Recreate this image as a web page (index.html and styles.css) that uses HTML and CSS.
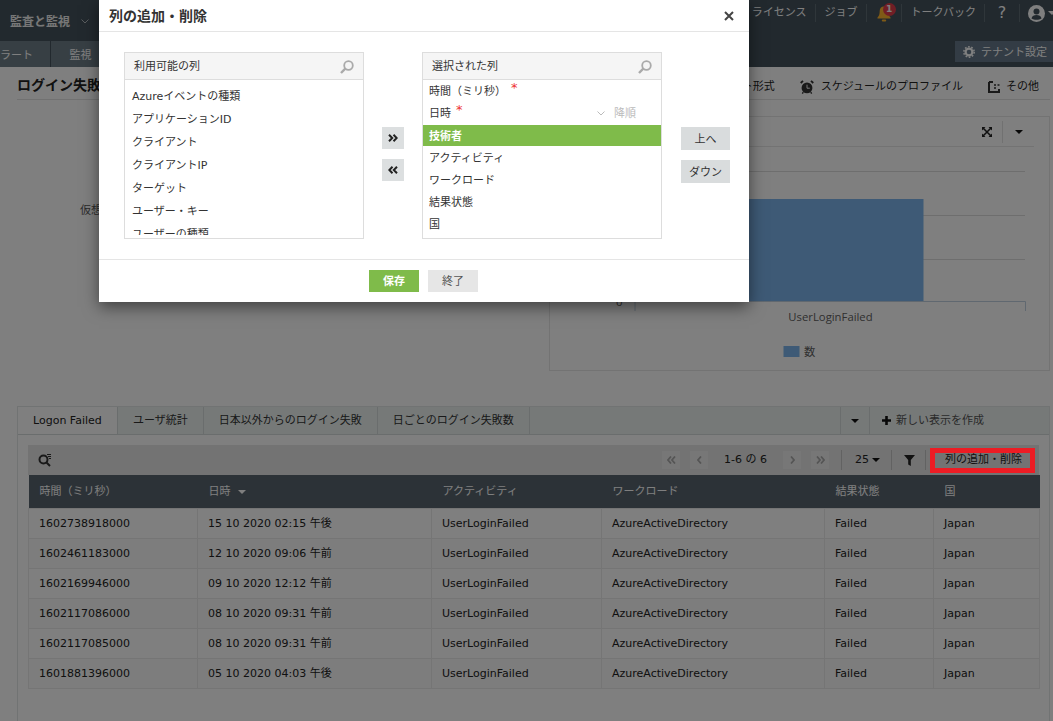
FILE: index.html
```html
<!DOCTYPE html>
<html lang="ja">
<head>
<meta charset="utf-8">
<title>列の追加・削除</title>
<link rel="stylesheet" href="styles.css">
</head>
<body>
<div class="app">
  <header class="topbar">
    <div class="brand">監査と監視<svg class="brand-chev" width="8" height="5" viewBox="0 0 8 5"><path d="M.5.5 4 4 7.5.5" fill="none" stroke="#fff" stroke-width="1"/></svg></div>
    <nav class="topnav">
      <span class="topitem">ライセンス</span>
      <span class="topitem">ジョブ</span>
      <span class="topitem bell">
        <svg width="14" height="17" viewBox="0 0 14 17"><path d="M7 1.500c-2.800 0-4.300 2-4.300 4.600 0 3.300-.7 5-2.200 6.400v1h13v-1c-1.500-1.400-2.200-3.100-2.200-6.400C11.300 3.500 9.800 1.500 7 1.500z" fill="#ffb52e"/><rect x="4.800" y="14.500" width="4.400" height="2" rx="1" fill="#ffb52e"/></svg>
        <b class="badge">1</b>
      </span>
      <span class="topitem">トークバック</span>
      <span class="topitem help">?</span>
      <span class="topitem user">
        <svg width="17" height="17" viewBox="0 0 17 17"><circle cx="8.500" cy="8.500" r="8.500" fill="#fff"/><circle cx="8.500" cy="6.500" r="3" fill="#44525c"/><path d="M3.500 13.500c.6-2.600 2.500-3.500 5-3.500s4.400.9 5 3.500c-2.800 1.700-7.200 1.700-10 0z" fill="#44525c"/></svg>
        <i class="user-caret"></i>
      </span>
    </nav>
  </header>
  <div class="subnav">
    <div class="subtabs"><span class="subtab first">ラート</span><span class="subtab">監視</span></div>
    <div class="tenant">
      <svg width="12" height="12" viewBox="0 0 12 12"><circle cx="6" cy="6" r="3.400" fill="none" stroke="#fff" stroke-width="2.200"/><circle cx="6" cy="6" r="5.200" fill="none" stroke="#fff" stroke-width="1.500" stroke-dasharray="1.700 1.570"/></svg>
      <span class="tenant-label">テナント設定</span>
    </div>
  </div>
  <main class="main">
    <div class="titlebar">
      <h1 class="page-title">ログイン失敗</h1>
      <div class="actions">
        <span class="action">エクスポート形式</span>
        <span class="action wide">
          <svg width="14" height="14" viewBox="0 0 15 15"><circle cx="7.500" cy="8.500" r="5.800" fill="#333"/><path d="M7.500 5v3.800h3" fill="none" stroke="#fff" stroke-width="1"/><path d="M.8 3.200 3.200.9M14.200 3.200 11.800.9" stroke="#333" stroke-width="2"/><path d="M3.500 13 2.500 14.500M11.500 13l1 1.500" stroke="#333" stroke-width="1.500"/></svg>
          スケジュールのプロファイル
        </span>
        <span class="action">
          <svg width="12" height="12" viewBox="0 0 12 12"><path d="M1 1v10h10V8" fill="none" stroke="#333" stroke-width="2"/><path d="M1 1h4" stroke="#333" stroke-width="2"/><path d="M6 4h2M9.500 4h2M6 7h2" stroke="#333" stroke-width="1.500"/></svg>
          その他
        </span>
      </div>
    </div>
    <section class="report">
      <div class="report-left"><span class="axis-note">仮想</span></div>
      <div class="chart-panel">
        <div class="chart-tools">
          <svg width="12" height="12" viewBox="0 0 12 12"><path d="M1 1h3.500L1 4.500zM11 1v3.500L7.500 1zM1 11V7.500L4.500 11zM11 11H7.500L11 7.500z" fill="#222"/><path d="M2 2l8 8M10 2l-8 8" stroke="#222" stroke-width="1.600"/></svg>
          <span class="tool-sep"></span>
          <i class="caret"></i>
        </div>
        <div class="chart-rule"></div>
        <svg class="plot" width="499" height="225" viewBox="0 0 499 225">
          <path d="M85 24.500H475M85 68.500H475M85 112.500H475" stroke="#ddd" fill="none"/>
          <rect x="85" y="52" width="288.500" height="103" fill="#7cb5ec"/>
          <path d="M85 164v-9.500h390.500v9.500" stroke="#c0d0e0" fill="none"/>
          <text x="66" y="159" class="plot-label">0</text>
          <text x="280.500" y="174" class="plot-label" text-anchor="middle">UserLoginFailed</text>
          <rect x="233.500" y="199" width="16" height="11" fill="#7cb5ec"/>
          <text x="254" y="209" class="plot-label">数</text>
        </svg>
      </div>
    </section>
    <section class="views">
      <div class="tabbar">
        <span class="tab active">Logon Failed</span>
        <span class="tab">ユーザ統計</span>
        <span class="tab">日本以外からのログイン失敗</span>
        <span class="tab">日ごとのログイン失敗数</span>
        <span class="tab-fill"></span>
        <span class="tab-tool"><i class="caret"></i></span>
        <span class="tab-new">
          <svg width="9" height="9" viewBox="0 0 9 9"><path d="M4.500 0v9M0 4.500h9" stroke="#111" stroke-width="2.600"/></svg>
          新しい表示を作成
        </span>
      </div>
      <div class="table-wrap">
        <div class="tbl-tools">
          <svg class="tbl-search" width="14" height="14" viewBox="0 0 14 14"><circle cx="5.500" cy="6.500" r="4" fill="none" stroke="#333" stroke-width="2"/><path d="M8.500 9.500 12 13" stroke="#333" stroke-width="2"/><path d="M9 1.500h4M10 3.500h3M11 5.500h2" stroke="#333" stroke-width="1"/></svg>
          <div class="pager">
            <span class="pg"><svg width="9" height="8" viewBox="0 0 9 8"><path d="M4 .5 1 4l3 3.500M8 .5 5 4l3 3.500" fill="none" stroke="#aaa" stroke-width="1.800"/></svg></span>
            <span class="pg"><svg width="5" height="8" viewBox="0 0 5 8"><path d="M4 .5 1 4l3 3.500" fill="none" stroke="#aaa" stroke-width="1.800"/></svg></span>
            <span class="pg-count">1-6 の 6</span>
            <span class="pg"><svg width="5" height="8" viewBox="0 0 5 8"><path d="M1 .5 4 4 1 7.500" fill="none" stroke="#aaa" stroke-width="1.800"/></svg></span>
            <span class="pg"><svg width="9" height="8" viewBox="0 0 9 8"><path d="M1 .5 4 4 1 7.500M5 .5 8 4 5 7.500" fill="none" stroke="#aaa" stroke-width="1.800"/></svg></span>
          </div>
          <span class="tbl-sep sep-a"></span>
          <span class="per-page">25<i class="caret"></i></span>
          <span class="tbl-sep sep-b"></span>
          <svg class="funnel" width="11" height="11" viewBox="0 0 11 11"><path d="M0 0h11L6.800 5v6L4.200 9.500V5z" fill="#222"/></svg>
          <span class="tbl-sep sep-c"></span>
          <span class="add-col">列の追加・削除</span>
        </div>
        <table class="grid">
          <colgroup><col class="c1"><col class="c2"><col class="c3"><col class="c4"><col class="c5"><col class="c6"></colgroup>
          <thead>
            <tr><th>時間（ミリ秒）</th><th>日時<i class="sort-caret"></i></th><th>アクティビティ</th><th>ワークロード</th><th>結果状態</th><th>国</th></tr>
          </thead>
          <tbody>
            <tr><td>1602738918000</td><td>15 10 2020 02:15 午後</td><td>UserLoginFailed</td><td>AzureActiveDirectory</td><td>Failed</td><td>Japan</td></tr>
            <tr><td>1602461183000</td><td>12 10 2020 09:06 午前</td><td>UserLoginFailed</td><td>AzureActiveDirectory</td><td>Failed</td><td>Japan</td></tr>
            <tr><td>1602169946000</td><td>09 10 2020 12:12 午前</td><td>UserLoginFailed</td><td>AzureActiveDirectory</td><td>Failed</td><td>Japan</td></tr>
            <tr><td>1602117086000</td><td>08 10 2020 09:31 午前</td><td>UserLoginFailed</td><td>AzureActiveDirectory</td><td>Failed</td><td>Japan</td></tr>
            <tr><td>1602117085000</td><td>08 10 2020 09:31 午前</td><td>UserLoginFailed</td><td>AzureActiveDirectory</td><td>Failed</td><td>Japan</td></tr>
            <tr><td>1601881396000</td><td>05 10 2020 04:03 午後</td><td>UserLoginFailed</td><td>AzureActiveDirectory</td><td>Failed</td><td>Japan</td></tr>
          </tbody>
        </table>
      </div>
    </section>
  </main>
</div>

<div class="overlay"></div>

<div class="modal">
  <div class="modal-head">
    <h2 class="modal-title">列の追加・削除</h2>
    <svg class="close" width="10" height="10" viewBox="0 0 10 10"><path d="M1 1l8 8M9 1 1 9" stroke="#444" stroke-width="2"/></svg>
  </div>
  <div class="modal-body">
    <div class="listbox">
      <div class="list-head"><span>利用可能の列</span>
        <svg width="14" height="14" viewBox="0 0 14 14"><circle cx="8.500" cy="5.500" r="4.300" fill="none" stroke="#aaa" stroke-width="1.800"/><path d="M5.300 8.700 1 13" stroke="#aaa" stroke-width="2.400"/></svg>
      </div>
      <ul class="items avail">
        <li>Azureイベントの種類</li>
        <li>アプリケーションID</li>
        <li>クライアント</li>
        <li>クライアントIP</li>
        <li>ターゲット</li>
        <li>ユーザー・キー</li>
        <li>ユーザーの種類</li>
      </ul>
    </div>
    <div class="movers">
      <span class="mover"><svg width="10" height="8" viewBox="0 0 10 8"><path d="M1 .8 4.200 4 1 7.200M5.500 .8 8.700 4 5.500 7.200" fill="none" stroke="#222" stroke-width="2"/></svg></span>
      <span class="mover"><svg width="10" height="8" viewBox="0 0 10 8"><path d="M4.500 .8 1.300 4l3.200 3.200M9 .8 5.800 4 9 7.200" fill="none" stroke="#222" stroke-width="2"/></svg></span>
    </div>
    <div class="listbox">
      <div class="list-head"><span>選択された列</span>
        <svg width="14" height="14" viewBox="0 0 14 14"><circle cx="8.500" cy="5.500" r="4.300" fill="none" stroke="#aaa" stroke-width="1.800"/><path d="M5.300 8.700 1 13" stroke="#aaa" stroke-width="2.400"/></svg>
      </div>
      <ul class="items chosen">
        <li>時間（ミリ秒）<em class="req">*</em></li>
        <li>日時<em class="req">*</em>
          <span class="order"><svg width="8" height="5" viewBox="0 0 8 5"><path d="M.5.5 4 4 7.500.5" fill="none" stroke="#bbb"/></svg>降順</span>
        </li>
        <li class="selected">技術者</li>
        <li>アクティビティ</li>
        <li>ワークロード</li>
        <li>結果状態</li>
        <li>国</li>
      </ul>
    </div>
    <div class="orderers">
      <span class="orderer">上へ</span>
      <span class="orderer">ダウン</span>
    </div>
  </div>
  <div class="modal-foot">
    <span class="btn save">保存</span>
    <span class="btn quit">終了</span>
  </div>
</div>
</body>
</html>
```

FILE: styles.css
```css
* { box-sizing: border-box; }
html, body { margin: 0; padding: 0; }
body {
  width: 1053px;
  height: 721px;
  overflow: hidden;
  position: relative;
  background: #fff;
  color: #333;
  font: 11px/1.2 "DejaVu Sans", "Noto Sans CJK JP", sans-serif;
}
ul { list-style: none; margin: 0; padding: 0; }
h1, h2 { margin: 0; }
.app { height: 721px; overflow: hidden; }

.topbar {
  height: 41px;
  background: #44525c;
  display: flex;
  justify-content: space-between;
  color: #fff;
}
.brand {
  padding: 14px 0 0 10px;
  width: 300px;
  font-size: 12px;
  font-weight: 700;
  color: #eee;
  line-height: 16px;
}
.brand-chev { margin-left: 11px; vertical-align: 2px; opacity: .6; }
.topnav { display: flex; height: 26px; padding-top: 4px; align-items: flex-start; }
.topitem {
  height: 18px;
  padding: 0 8px 0 9px;
  border-right: 1px solid #5f6c75;
  line-height: 16px;
  color: #fff;
  display: flex;
  align-items: center;
}
.bell { position: relative; padding: 0 10px; width: 35px; }
.badge {
  position: absolute;
  left: 16px;
  top: -1px;
  width: 13px;
  height: 13px;
  border-radius: 50%;
  background: #e33d4a;
  color: #fff;
  font: 700 9px/13px "DejaVu Sans", sans-serif;
  text-align: center;
}
.help { width: 35px; padding: 0; justify-content: center; font-size: 16px; color: #fff; }
.user { border: 0; padding: 0 0 0 8px; gap: 3px; width: 33px; overflow: hidden; }
.user svg { flex: none; }
.user-caret {
  flex: none;
  border: 4px solid transparent;
  border-top-color: #fff;
  border-bottom: 0;
}

.subnav {
  height: 26px;
  background: #44525c;
  display: flex;
  justify-content: space-between;
  color: #fff;
}
.subtabs { display: flex; background: #6f7f89; width: 210px; }
.subtab {
  width: 60px;
  text-align: center;
  line-height: 30px;
  border-right: 1px solid #44525c;
}
.subtab.first { width: 51px; text-align: left; }
.tenant {
  width: 98px;
  height: 21px;
  background: #67798a;
  display: flex;
  align-items: center;
  gap: 6px;
  padding-left: 8px;
  white-space: nowrap;
  overflow: hidden;
}
.tenant svg { flex: none; }
.tenant-label { padding-top: 2px; }

.main { padding: 0 3px 0 17px; }
.titlebar {
  height: 33px;
  padding-top: 4px;
  border-bottom: 1px solid #e2e2e2;
  display: flex;
  justify-content: space-between;
  align-items: center;
}
.page-title { font-size: 14px; font-weight: 700; color: #222; white-space: nowrap; }
.actions { display: flex; gap: 25px; padding: 3px 11px 0 0; }
.action { display: flex; align-items: center; gap: 6px; color: #222; }
.action.wide { gap: 7px; }

.report { display: flex; justify-content: space-between; padding-top: 16px; height: 287px; }
.report-left { padding: 88px 0 0 63px; }
.axis-note { color: #555; }
.chart-panel { width: 501px; height: 255px; border: 1px solid #e6e6e6; }
.chart-tools {
  height: 29px;
  display: flex;
  align-items: center;
  justify-content: flex-end;
  padding-right: 26px;
}
.chart-tools .tool-sep { width: 1px; height: 22px; background: #e2e2e2; margin: 0 12px 0 9px; }
.chart-rule { height: 1px; background: #e6e6e6; margin-right: 15px; }
.plot { display: block; }
.plot-label { font: 11.300px "Open Sans", "Noto Sans CJK JP", sans-serif; fill: #606060; }
.caret {
  display: inline-block;
  border: 4px solid transparent;
  border-top: 4px solid #111;
  border-bottom: 0;
}

.views {
  margin-top: 19px;
  height: 340px;
  border: 1px solid #e2e6e6;
  border-bottom: 0;
}
.tabbar {
  height: 28px;
  display: flex;
  background: #ecf2f1;
  border-bottom: 1px solid #d4dbda;
}
.tab {
  padding: 0 15px;
  line-height: 27px;
  border-right: 1px solid #d4dbda;
  color: #333;
  white-space: nowrap;
}
.tab.active { background: #fff; height: 27px; color: #222; width: 100px; padding: 0 0 0 15px; }
.tab-fill { flex: 1; }
.tab-tool {
  width: 30px;
  border-left: 1px solid #d4dbda;
  border-right: 1px solid #d4dbda;
  display: flex;
  align-items: center;
  justify-content: center;
}
.tab-new {
  width: 179px;
  padding-left: 12px;
  display: flex;
  align-items: center;
  gap: 5px;
  color: #555;
}
.table-wrap { padding: 10px 10px 0; }
.tbl-tools {
  height: 30px;
  background: #e6e6e6;
  display: flex;
  align-items: center;
  padding-left: 10px;
}
.tbl-search { margin-right: auto; }
.pager { display: flex; align-items: center; gap: 10px; }
.pg {
  width: 18px;
  height: 18px;
  background: #efefef;
  display: flex;
  align-items: center;
  justify-content: center;
}
.pg-count { width: 55px; text-align: center; color: #222; white-space: nowrap; }
.tbl-sep { width: 1px; height: 20px; background: #c4c4c4; }
.sep-a { margin: 0 13px 0 12px; }
.sep-b { margin: 0 12px 0 11px; }
.sep-c { margin-left: 10px; }
.per-page { width: 25px; display: flex; align-items: center; justify-content: space-between; color: #222; }
.funnel { flex: none; }
.add-col {
  position: relative;
  width: 113px;
  height: 30px;
  padding-left: 19px;
  line-height: 30px;
  color: #222;
  white-space: nowrap;
}
.add-col::after {
  content: "";
  position: absolute;
  z-index: 30;
  left: 4px;
  top: 3px;
  width: 95px;
  height: 15px;
  border: 5px solid #ed1c24;
}

.grid { width: 1011px; border-collapse: collapse; table-layout: fixed; }
.c1 { width: 169px; }
.c2 { width: 234px; }
.c3 { width: 170px; }
.c4 { width: 223px; }
.c5 { width: 109px; }
.c6 { width: 106px; }
.grid th {
  height: 33px;
  background: #58646e;
  color: #fff;
  font-weight: 400;
  text-align: left;
  padding: 0 11px;
}
.grid td {
  height: 30px;
  padding: 2px 10px 0;
  border: 1px solid #eaeaea;
  color: #222;
  white-space: nowrap;
}
.grid tbody tr:nth-child(even) td { background: #fafafa; }
.sort-caret {
  display: inline-block;
  border: 4px solid transparent;
  border-top-color: #fff;
  border-bottom: 0;
  margin-left: 7px;
  vertical-align: 1px;
}

.overlay {
  position: absolute;
  inset: 0;
  z-index: 10;
  background: rgba(0, 0, 0, .5);
}
.modal {
  position: absolute;
  z-index: 20;
  left: 99px;
  top: 0;
  width: 650px;
  height: 302px;
  background: #fff;
  box-shadow: 0 5px 15px rgba(0, 0, 0, .5);
  display: flex;
  flex-direction: column;
}
.modal-head {
  height: 32px;
  border-bottom: 1px solid #e5e5e5;
  display: flex;
  align-items: center;
  justify-content: space-between;
  padding: 0 15px 0 10px;
}
.modal-title { font-size: 14px; font-weight: 700; color: #333; padding-top: 2px; }
.close { display: block; }
.modal-body {
  height: 228px;
  border-bottom: 1px solid #e5e5e5;
  padding: 20px 0 0 25px;
  display: flex;
  align-items: flex-start;
}
.listbox {
  width: 240px;
  height: 187px;
  border: 1px solid #ddd;
  overflow: hidden;
}
.list-head {
  height: 27px;
  background: #f5f5f5;
  border-bottom: 1px solid #ddd;
  display: flex;
  align-items: center;
  justify-content: space-between;
  padding: 2px 9px 0;
  color: #333;
}
.items { color: #333; }
.avail { padding-top: 5px; height: 155px; overflow: hidden; }
.avail li { height: 23px; line-height: 24px; padding-left: 7px; white-space: nowrap; }
.chosen li {
  height: 21px;
  line-height: 21px;
  margin-bottom: 1px;
  padding: 1px 25px 0 6px;
  display: flex;
  align-items: center;
}
.chosen li:nth-child(2) { margin-bottom: 2px; }
.chosen .selected { background: #7fbb4a; color: #fff; font-weight: 700; }
.req {
  color: #e33;
  font-style: normal;
  font-size: 13px;
  line-height: 10px;
  align-self: flex-start;
  margin: 2px 0 0 5px;
}
.order {
  margin-left: auto;
  display: flex;
  align-items: center;
  gap: 9px;
  color: #bbb;
}
.movers {
  width: 58px;
  padding: 75px 0 0 18px;
  display: flex;
  flex-direction: column;
  gap: 10px;
}
.mover {
  width: 22px;
  height: 22px;
  background: #dcdfe0;
  display: flex;
  align-items: center;
  justify-content: center;
}
.orderers {
  margin-left: 19px;
  padding-top: 75px;
  display: flex;
  flex-direction: column;
  gap: 10px;
}
.orderer {
  width: 49px;
  height: 23px;
  background: #d9dcdd;
  text-align: center;
  line-height: 25px;
  color: #333;
}
.modal-foot {
  flex: 1;
  display: flex;
  justify-content: center;
  align-items: flex-start;
  gap: 9px;
  padding: 10px 1px 0 0;
}
.btn {
  width: 50px;
  height: 22px;
  text-align: center;
  line-height: 23px;
}
.save { background: #7fbb4a; color: #fff; font-weight: 700; }
.quit { background: #e6e6e6; color: #555; }
```
